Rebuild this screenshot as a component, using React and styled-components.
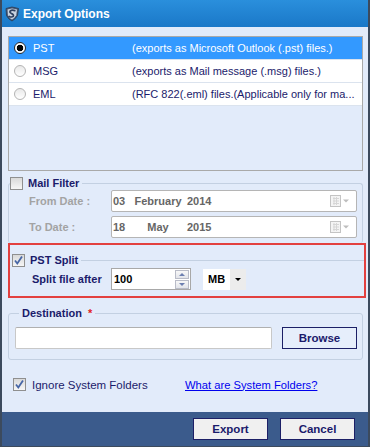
import React from "react";
import styled, { createGlobalStyle } from "styled-components";

const NAVY = "#1b1b6b";
const LINE = "#c3d0e2";

const GlobalStyle = createGlobalStyle`
  html, body { margin: 0; padding: 0; background: #fff; }
  body { font-family: "Liberation Sans", Arial, sans-serif; font-size: 11px; }
  * { box-sizing: border-box; }
`;

const Window = styled.div`
  width: 370px;
  height: 447px;
  display: flex;
  flex-direction: column;
  border: solid #3c4a5d;
  border-width: 0 2px 1px 2px;
  background: #e2ebfa;
`;

const TitleBar = styled.div`
  height: 27px;
  flex: none;
  display: flex;
  align-items: center;
  gap: 3px;
  padding-left: 2px;
  background: linear-gradient(#2a8fdc, #1a78c8);
`;

const Title = styled.span`
  color: #fff;
  font-weight: 700;
  font-size: 12px;
`;

const Body = styled.div`
  flex: 1;
  min-height: 0;
  display: flex;
  flex-direction: column;
  padding: 9px 5px 0 6px;
`;

const FormatList = styled.div`
  height: 135px;
  flex: none;
  border: 1px solid #a9a9a9;
`;

const FormatRow = styled.div`
  height: 23px;
  display: flex;
  align-items: center;
  border-bottom: 1px solid #dbe3ee;
  background: ${(p) => (p.$selected ? "#3399ff" : "#fff")};
  color: ${(p) => (p.$selected ? "#fff" : NAVY)};
  white-space: nowrap;
  overflow: hidden;
`;

const Radio = styled.span`
  flex: none;
  width: 12px;
  height: 12px;
  margin: 0 7px 0 5px;
  border-radius: 50%;
  border: 1px solid ${(p) => (p.$checked ? "#2a2a2a" : "#b4b4b4")};
  background: ${(p) =>
    p.$checked
      ? "radial-gradient(circle, #000 0 3px, #fff 3.6px)"
      : "linear-gradient(#e9e9e9, #fff)"};
`;

const FormatName = styled.span`
  width: 99px;
  flex: none;
`;

const FormatDesc = styled.span`
  overflow: hidden;
`;

const Group = styled.fieldset`
  margin: ${(p) => p.$mt || 0}px 0 0;
  padding: ${(p) => p.$pad || "0"};
  border: 1px solid ${LINE};
  border-bottom: ${(p) => (p.$open ? "none" : `1px solid ${LINE}`)};
  border-radius: 3px;
  min-width: 0;
`;

const SplitGroup = styled.fieldset`
  margin: 0;
  padding: 1px 0 0;
  border: none;
  border-top: 1px solid ${LINE};
  min-width: 0;
`;

const Legend = styled.legend`
  margin-left: ${(p) => p.$ml || 0}px;
  padding: ${(p) => p.$pad || "0 3px 0 0"};
  height: 13px;
  line-height: 13px;
  display: flex;
  align-items: center;
  gap: 5px;
  color: ${NAVY};
  font-weight: 700;
  font-size: 11px;
`;

const Required = styled.span`
  color: #e02020;
  margin-left: 1px;
`;

const Box = styled.span`
  flex: none;
  width: 13px;
  height: 13px;
  display: inline-flex;
  align-items: center;
  justify-content: center;
  border: 1px solid #8f8f8f;
  background: linear-gradient(#d9d9d9, #f6f6f6);
`;

const CheckBox = ({ checked }) => (
  <Box>
    {checked && (
      <svg width="11" height="11" viewBox="0 0 11 11">
        <path d="M2 5.5 L4.3 8.5 L9 1.5" fill="none" stroke="#4766a6" strokeWidth="1.8" />
      </svg>
    )}
  </Box>
);

const FieldRow = styled.div`
  display: flex;
  align-items: center;
  padding-left: 20px;
  & + & {
    margin-top: 4px;
  }
`;

const FieldLabel = styled.span`
  width: ${(p) => p.$w}px;
  flex: none;
  white-space: nowrap;
  font-weight: 700;
  font-size: 11px;
  color: ${(p) => (p.$muted ? "#a3a3a3" : NAVY)};
`;

const DateBox = styled.div`
  width: 246px;
  height: 22px;
  display: flex;
  align-items: center;
  padding: 0 6px 0 1px;
  border: 1px solid #b5b5b5;
  border-radius: 2px;
  background: #fff;
  color: #666;
  font-weight: 700;
  font-size: 11px;
  white-space: nowrap;
`;

const DatePart = styled.span`
  width: ${(p) => p.$w}px;
  flex: none;
  margin-left: ${(p) => p.$ml || 0}px;
  text-align: ${(p) => p.$align || "left"};
`;

const CalendarIcon = () => (
  <svg width="20" height="14" viewBox="0 0 20 14" style={{ marginLeft: "auto" }}>
    <rect x="0.5" y="1.5" width="10" height="11" fill="#f4f4f4" stroke="#c4c4c4" />
    <path d="M3 4.5h6M3 7h6M3 9.5h6M4 3v8M6.5 3v8" stroke="#d6d6d6" strokeWidth="1" />
    <path d="M13 5.5h6l-3 3z" fill="#bdbdbd" />
  </svg>
);

const Highlight = styled.div`
  margin: 0 -3px 0 0;
  padding: 9px 0 6px 2px;
  border: 2px solid #e3403f;
`;

const NumberBox = styled.div`
  width: 80px;
  height: 22px;
  display: flex;
  align-items: center;
  padding: 0 1px 0 2px;
  border: 1px solid #a8a8a8;
  background: #fff;
  color: #000;
  font-weight: 700;
  font-size: 11px;
`;

const Spin = styled.div`
  margin-left: auto;
  display: flex;
  flex-direction: column;
  gap: 1px;
`;

const SpinButton = styled.span`
  width: 14px;
  height: 9px;
  display: flex;
  align-items: center;
  justify-content: center;
  border: 1px solid #b9bcc8;
  background: linear-gradient(#f8f8f8, #e2e4ea);
`;

const Arrow = ({ up, color = "#6c7fb0", size = 3 }) => (
  <svg width={size * 2} height={size} viewBox={`0 0 ${size * 2} ${size}`}>
    <path
      d={up ? `M0 ${size}L${size} 0L${size * 2} ${size}z` : `M0 0L${size} ${size}L${size * 2} 0z`}
      fill={color}
    />
  </svg>
);

const UnitSelect = styled.div`
  margin-left: 12px;
  width: 43px;
  height: 21px;
  display: flex;
  background: #fff;
`;

const UnitValue = styled.span`
  flex: 1;
  display: flex;
  align-items: center;
  padding-left: 5px;
  color: #000;
  font-weight: 700;
  font-size: 11px;
`;

const UnitArrow = styled.span`
  width: 16px;
  display: flex;
  align-items: center;
  justify-content: center;
  background: #ececec;
`;

const PathRow = styled.div`
  display: flex;
  align-items: center;
`;

const TextInput = styled.div`
  width: 257px;
  height: 22px;
  border: 1px solid #c8c8c8;
  border-top-color: #b0b0b0;
  border-radius: 2px;
  background: #fff;
`;

const Button = styled.button`
  width: 75px;
  height: ${(p) => p.$h || 22}px;
  margin-left: ${(p) => p.$ml || 0}px;
  padding: 0;
  border: 1px solid #1c1f66;
  background: ${(p) => p.$bg || "#f0f0f0"};
  color: ${NAVY};
  font-family: inherit;
  font-weight: 700;
  font-size: 11.5px;
`;

const OptionRow = styled.div`
  margin-top: 18px;
  padding-left: 5px;
  display: flex;
  align-items: center;
`;

const OptionLabel = styled.span`
  width: 153px;
  margin-left: 6px;
  color: ${NAVY};
  font-size: 11.5px;
`;

const HelpLink = styled.a`
  color: #0000ee;
  text-decoration: underline;
  font-size: 11.2px;
  cursor: pointer;
`;

const Footer = styled.div`
  height: 34px;
  flex: none;
  display: flex;
  justify-content: flex-end;
  align-items: flex-start;
  gap: 12px;
  padding: 6px 13px 0 0;
  background: #3b5b8c;
`;

const Logo = () => (
  <svg width="16" height="16" viewBox="0 0 16 16">
    <path d="M2 2.5 L8 1 L14.5 2.5 L13.5 9.5 Q11 13.5 8 15 Q4.5 13.5 2.5 9.5 Z" fill="#4a5c78" stroke="#2b3850" strokeWidth="0.8" />
    <path d="M3.6 3.6 L8 2.5 L13 3.6 L12.2 9.2 Q10.4 12.3 8 13.6 Q5.4 12.3 4 9.2 Z" fill="#c9d3e0" />
    <path d="M10.8 4.6 Q8 3.6 6.2 5 Q5.2 6.4 7.6 7.6 Q10.2 8.7 9.2 10.4 Q7.6 11.6 5.2 10.4" fill="none" stroke="#2f4160" strokeWidth="1.7" strokeLinecap="round" />
  </svg>
);

const formats = [
  { name: "PST", desc: "(exports as Microsoft Outlook (.pst) files.)" },
  { name: "MSG", desc: "(exports as Mail message (.msg) files.)" },
  { name: "EML", desc: "(RFC 822(.eml) files.(Applicable only for ma..." },
];

export default function App() {
  return (
    <>
      <GlobalStyle />
      <Window>
        <TitleBar>
          <Logo />
          <Title>Export Options</Title>
        </TitleBar>
        <Body>
          <FormatList>
            {formats.map((f, i) => (
              <FormatRow key={f.name} $selected={i === 0}>
                <Radio $checked={i === 0} />
                <FormatName>{f.name}</FormatName>
                <FormatDesc>{f.desc}</FormatDesc>
              </FormatRow>
            ))}
          </FormatList>

          <Group $mt={6} $pad="0 0 5px" $open>
            <Legend $ml={1}>
              <CheckBox />
              Mail Filter
            </Legend>
            <FieldRow>
              <FieldLabel $w={82} $muted>From Date :</FieldLabel>
              <DateBox>
                <DatePart $w={20}>03</DatePart>
                <DatePart $w={50} $align="center">February</DatePart>
                <DatePart $w={40} $ml={4}>2014</DatePart>
                <CalendarIcon />
              </DateBox>
            </FieldRow>
            <FieldRow>
              <FieldLabel $w={82} $muted>To Date :</FieldLabel>
              <DateBox>
                <DatePart $w={20}>18</DatePart>
                <DatePart $w={50} $align="center">May</DatePart>
                <DatePart $w={40} $ml={4}>2015</DatePart>
                <CalendarIcon />
              </DateBox>
            </FieldRow>
          </Group>

          <Highlight>
            <SplitGroup>
              <Legend>
                <CheckBox checked />
                PST Split
              </Legend>
              <FieldRow>
                <FieldLabel $w={79}>Split file after</FieldLabel>
                <NumberBox>
                  100
                  <Spin>
                    <SpinButton><Arrow up /></SpinButton>
                    <SpinButton><Arrow /></SpinButton>
                  </Spin>
                </NumberBox>
                <UnitSelect>
                  <UnitValue>MB</UnitValue>
                  <UnitArrow><Arrow color="#000" /></UnitArrow>
                </UnitSelect>
              </FieldRow>
            </SplitGroup>
          </Highlight>

          <Group $mt={9} $pad="7px 0 10px 6px">
            <Legend $ml={4} $pad="0 3px">
              Destination <Required>*</Required>
            </Legend>
            <PathRow>
              <TextInput />
              <Button $ml={10} $bg="#e6eefb">Browse</Button>
            </PathRow>
          </Group>

          <OptionRow>
            <CheckBox checked />
            <OptionLabel>Ignore System Folders</OptionLabel>
            <HelpLink>What are System Folders?</HelpLink>
          </OptionRow>
        </Body>
        <Footer>
          <Button>Export</Button>
          <Button>Cancel</Button>
        </Footer>
      </Window>
    </>
  );
}
